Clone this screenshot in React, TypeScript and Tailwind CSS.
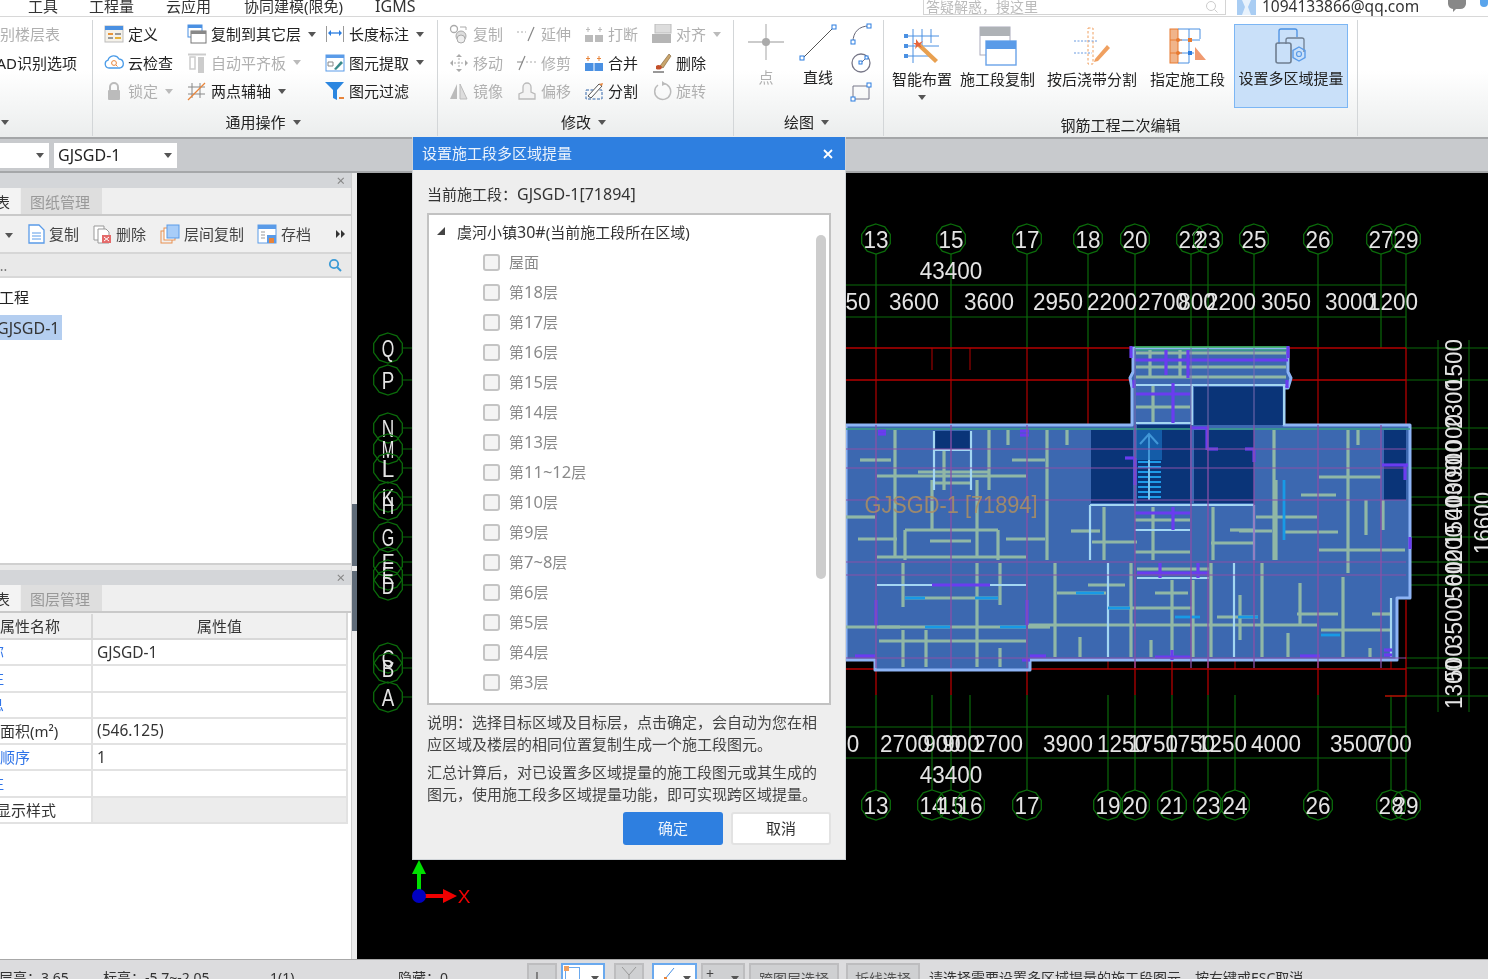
import React from "react";

const Caret = ({ dim = false }: { dim?: boolean }) => (
  <svg width="8" height="5" viewBox="0 0 8 5" className="shrink-0">
    <path d="M0 0h8L4 5z" fill={dim ? "#bbb" : "#555"} />
  </svg>
);

const S = ({ children, w = 20, h = 20 }: { children: React.ReactNode; w?: number; h?: number }) => (
  <svg width={w} height={h} viewBox={`0 0 ${w} ${h}`} fill="none" className="block shrink-0">
    {children}
  </svg>
);

// ribbon icons
const icons = {
  define: <S><rect x="1" y="2" width="18" height="16" fill="#f5f2ea" stroke="#bbb" /><rect x="1" y="2" width="18" height="4" fill="#4a90e2" /><rect x="4" y="9" width="5" height="2" fill="#e8943a" /><rect x="11" y="9" width="6" height="2" fill="#999" /><rect x="4" y="13" width="5" height="2" fill="#999" /><rect x="11" y="13" width="6" height="2" fill="#e8b13a" /></S>,
  copyLayer: <S><rect x="1" y="1" width="14" height="12" fill="#fff" stroke="#4a90e2" /><rect x="1" y="1" width="14" height="3" fill="#4a90e2" /><rect x="4" y="7" width="15" height="12" fill="#fff" stroke="#777" /><rect x="4" y="7" width="15" height="3" fill="#888" /></S>,
  dimension: <S><path d="M1.5 2v16M18.5 2v16" stroke="#999" /><path d="M4 9h12" stroke="#2b7de0" strokeWidth="1.3" /><path d="M3 9l3-3v6zM17 9l-3-3v6z" fill="#2b7de0" /></S>,
  cloud: <S><path d="M5 15a4 4 0 0 1-1-7.8A6 6 0 0 1 15 6a4.6 4.6 0 0 1 1 9z" fill="#fff" stroke="#4a9be8" strokeWidth="1.3" /><circle cx="10" cy="10" r="2.4" stroke="#e8843a" /><path d="M12 12l1.5 1.5" stroke="#e8843a" /></S>,
  align: <S><path d="M1 1.5h18" stroke="#ccc" strokeWidth="2" /><rect x="3" y="4" width="5" height="12" stroke="#ccc" strokeWidth="1.5" /><rect x="11" y="4" width="6" height="16" fill="#ccc" /></S>,
  extract: <S><rect x="1" y="2" width="18" height="16" fill="#fff" stroke="#5a9be8" /><rect x="1" y="2" width="18" height="3" fill="#5a9be8" /><path d="M3 9h5M3 13h5M3 9v4M8 9v4" stroke="#888" /><path d="M9 16l7-8 2 2-7 7z" fill="#3a8a8a" /></S>,
  lock: <S><path d="M6 9V6a4 4 0 0 1 8 0v3" stroke="#bbb" strokeWidth="2" /><rect x="4" y="9" width="12" height="10" rx="1" fill="#bbb" /></S>,
  axis: <S><path d="M5 2v15M13 2v15M1 6h17M1 13h17" stroke="#888" /><path d="M1 19L18 2" stroke="#e8843a" strokeWidth="1.3" /></S>,
  filter: <S><path d="M0 1h19l-7 8v10l-4-2V9z" fill="#2b86e0" /><rect x="14" y="16" width="5" height="2" fill="#e8843a" /></S>,
  copy: <S><circle cx="5" cy="5" r="3.5" stroke="#aaa" strokeWidth="1.3" /><circle cx="12" cy="12" r="5" fill="#ddd" stroke="#aaa" /><circle cx="12" cy="15" r="4" fill="#eee" stroke="#aaa" /><path d="M11 3h6v3" stroke="#aaa" /></S>,
  move: <S><path d="M10 1l3 3H7zM10 19l3-3H7zM1 10l3-3v6zM19 10l-3-3v6z" fill="#aaa" /><path d="M10 5v10M5 10h10" stroke="#aaa" strokeDasharray="2 1.5" /></S>,
  mirror: <S><path d="M8 3v15H1z" fill="#bbb" /><path d="M11 3v15h7z" fill="#ddd" stroke="#bbb" /></S>,
  extend: <S><path d="M0 8h9" stroke="#aaa" strokeDasharray="2 2" /><path d="M11 17l6-14" stroke="#888" strokeWidth="1.2" /></S>,
  trim: <S><path d="M2 17l6-14" stroke="#888" strokeWidth="1.2" /><path d="M0 9h6" stroke="#888" /><path d="M9 9h10" stroke="#aaa" strokeDasharray="2 2" /></S>,
  offset: <S><path d="M2 18v-5l4-2V6a4 4 0 0 1 8 0v5l4 2v5z" fill="#f3f3f3" stroke="#bbb" strokeWidth="1.3" /></S>,
  breakIt: <S><rect x="1" y="11" width="8" height="7" fill="#bbb" /><rect x="11" y="11" width="8" height="7" fill="#bbb" /><path d="M4 3v5M2 5.5h4M16 3v5M14 5.5h4" stroke="#bbb" /></S>,
  merge: <S><rect x="1" y="10" width="8.5" height="8" fill="#4a90e2" /><rect x="10.5" y="10" width="8.5" height="8" fill="#4a90e2" /><path d="M4 3v5M2 5.5h4" stroke="#e8843a" /><path d="M15 3v5M13 5.5h4" stroke="#e8843a" /></S>,
  split: <S><path d="M2 9h16v9H2z" stroke="#36a" strokeDasharray="3 1.5" /><path d="M4 15L15 3l3 2L7 17z" fill="#fff" stroke="#555" /><path d="M15 3l3 2 1-3z" fill="#e8843a" /></S>,
  alignTop: <S><rect x="3" y="0" width="16" height="9" fill="#ddd" stroke="#bbb" /><rect x="0" y="10" width="19" height="9" fill="#b5b5b5" /></S>,
  erase: <S><path d="M8 13L17 1l2 2-8 12z" fill="#c9a56c" stroke="#7a5a30" strokeWidth=".6" /><path d="M4 13c2-2 5-1 6 1 0 3-4 3-6 2z" fill="#c3502a" /><path d="M1 19h11" stroke="#333" /></S>,
  rotate: <S><path d="M6 4a8 8 0 1 0 5-1.5" stroke="#bbb" strokeWidth="1.5" /><path d="M10 0l4 3-4 2z" fill="#bbb" /></S>,
};

type Tool = { icon: keyof typeof icons; label: string; dim?: boolean; caret?: boolean };

const Item = ({ icon, label, dim, caret }: Tool) => (
  <div className="flex items-center h-[28.5px] whitespace-nowrap">
    <span className="w-[19px] mr-[5px] shrink-0">{icons[icon]}</span>
    <span className={dim ? "text-[#b0b0b0]" : "text-[#222]"}>{label}</span>
    {caret && <span className="ml-[7px]"><Caret dim={dim} /></span>}
  </div>
);

const common: Tool[][] = [
  [{ icon: "define", label: "定义" }, { icon: "cloud", label: "云检查" }, { icon: "lock", label: "锁定", dim: true, caret: true }],
  [{ icon: "copyLayer", label: "复制到其它层", caret: true }, { icon: "align", label: "自动平齐板", dim: true, caret: true }, { icon: "axis", label: "两点辅轴", caret: true }],
  [{ icon: "dimension", label: "长度标注", caret: true }, { icon: "extract", label: "图元提取", caret: true }, { icon: "filter", label: "图元过滤" }],
];

const modify: Tool[][] = [
  [{ icon: "copy", label: "复制", dim: true }, { icon: "move", label: "移动", dim: true }, { icon: "mirror", label: "镜像", dim: true }],
  [{ icon: "extend", label: "延伸", dim: true }, { icon: "trim", label: "修剪", dim: true }, { icon: "offset", label: "偏移", dim: true }],
  [{ icon: "breakIt", label: "打断", dim: true }, { icon: "merge", label: "合并" }, { icon: "split", label: "分割" }],
  [{ icon: "alignTop", label: "对齐", dim: true, caret: true }, { icon: "erase", label: "删除" }, { icon: "rotate", label: "旋转", dim: true }],
];

const GroupLabel = ({ label }: { label: string }) => (
  <div className="mt-auto h-[28px] flex items-center justify-center gap-[7px] pr-[4px] text-[#222]">
    <span>{label}</span>
    <Caret />
  </div>
);

const BigButton = ({ w, label, children, caret }: { w: string; label: string; children: React.ReactNode; caret?: boolean }) => (
  <div className={`${w} h-[84px] mt-[4px] flex flex-col items-center whitespace-nowrap`}>
    <div className="h-[44px] flex items-center">{children}</div>
    <div className="mt-[1px] leading-[20px]">{label}</div>
    {caret && <div className="mt-[6px]"><Caret /></div>}
  </div>
);

const Ribbon = () => (
  <div className="h-[122px] flex pt-[3px] pb-[1px] bg-linear-to-b from-white from-45% to-[#ebeded] border-b-2 border-[#a4a6a8] leading-[20px]">
    {/* first group is cut off by the window edge */}
    <div className="w-[93px] shrink-0 flex flex-col border-r border-[#d3d6d8] overflow-hidden">
      <div className="h-[28.5px] flex items-center -ml-[15px] whitespace-nowrap text-[#b0b0b0]">识别楼层表</div>
      <div className="h-[28.5px] flex items-center -ml-[13px] whitespace-nowrap">CAD识别选项</div>
      <div className="mt-auto h-[28px] flex items-center pl-[1px]"><Caret /></div>
    </div>
    <div className="w-[345px] shrink-0 flex flex-col border-r border-[#d3d6d8]">
      <div className="grid grid-cols-[83px_138px_1fr] pl-[11px]">
        {common.map((col, i) => <div key={i}>{col.map((t) => <Item key={t.label} {...t} />)}</div>)}
      </div>
      <GroupLabel label="通用操作" />
    </div>
    <div className="w-[296px] shrink-0 flex flex-col border-r border-[#d3d6d8]">
      <div className="grid grid-cols-[68px_67px_68px_1fr] pl-[11px]">
        {modify.map((col, i) => <div key={i}>{col.map((t) => <Item key={t.label} {...t} />)}</div>)}
      </div>
      <GroupLabel label="修改" />
    </div>
    <div className="w-[150px] shrink-0 flex flex-col border-r border-[#d3d6d8]">
      <div className="flex">
        <div className="w-[64px] flex flex-col items-center pt-[3px]">
          <S w={38} h={38}><path d="M19 1v36M1 19h36" stroke="#bbb" strokeWidth="1.3" /><circle cx="19" cy="19" r="4" fill="#aaa" /></S>
          <div className="mt-[6px] text-[#b0b0b0]">点</div>
        </div>
        <div className="w-[40px] flex flex-col items-center pt-[3px]">
          <S w={38} h={38}><path d="M3 36L35 4" stroke="#555" /><rect x="1" y="33" width="4" height="4" fill="#fff" stroke="#2b7de0" /><rect x="33" y="2" width="4" height="4" fill="#fff" stroke="#2b7de0" /></S>
          <div className="mt-[6px]">直线</div>
        </div>
        <div className="flex-1 flex flex-col items-center">
          <div className="h-[28.5px] flex items-center"><S w={22} h={22}><path d="M3 19C3 9 9 3 19 3" stroke="#667" /><rect x="1" y="17" width="4" height="4" fill="#fff" stroke="#2b7de0" /><rect x="17" y="1" width="4" height="4" fill="#fff" stroke="#2b7de0" /></S></div>
          <div className="h-[28.5px] flex items-center"><S w={22} h={22}><circle cx="11" cy="11" r="9" stroke="#778" strokeWidth="1.3" /><path d="M11 11l5-5" stroke="#778" /><rect x="9" y="9" width="3" height="3" fill="#fff" stroke="#2b7de0" /><rect x="15" y="4" width="3" height="3" fill="#fff" stroke="#2b7de0" /></S></div>
          <div className="h-[28.5px] flex items-center"><S w={22} h={22}><path d="M3 6h16v13H3z" stroke="#778" /><rect x="1" y="17" width="4" height="4" fill="#fff" stroke="#2b7de0" /><rect x="17" y="3" width="4" height="4" fill="#fff" stroke="#2b7de0" /></S></div>
        </div>
      </div>
      <GroupLabel label="绘图" />
    </div>
    <div className="w-[474px] shrink-0 flex flex-col border-r border-[#d3d6d8]">
      <div className="flex">
        <BigButton w="w-[76px]" label="智能布置" caret>
          <S w={38} h={38}>
            <path d="M2 9h34M2 19h34M2 29h24M10 2v34M19 2v20M28 2v14" stroke="#4a90e2" />
            <path d="M1 7h4v4H1zM1 17h4v4H1zM1 27h4v4H1z" fill="#4a90e2" />
            <path d="M17 16l18 17-3 3-18-17z" fill="#e8a050" />
            <path d="M13 12l3 4 4-2-3 4 2 3-4-2-3 3 1-4-3-2h3z" fill="#e8643a" />
          </S>
        </BigButton>
        <BigButton w="w-[75px]" label="施工段复制">
          <S w={38} h={40}>
            <rect x="1" y="1" width="30" height="28" fill="#fff" stroke="#aab" />
            <rect x="1" y="1" width="30" height="9" fill="#aeb2b6" />
            <rect x="7" y="15" width="30" height="24" fill="#fff" stroke="#6aa3e8" strokeWidth="1.4" />
            <rect x="7" y="15" width="30" height="8" fill="#5a9be8" />
          </S>
        </BigButton>
        <BigButton w="w-[114px]" label="按后浇带分割">
          <S w={38} h={38}>
            <path d="M15 1h5v36h-5z" stroke="#f0a060" strokeDasharray="2.5 2" />
            <path d="M1 14h24M1 26h18" stroke="#6a9be0" strokeDasharray="2 1.5" />
            <path d="M22 32l12-14 3 3-12 13-4 1z" fill="#f0a060" />
          </S>
        </BigButton>
        <BigButton w="w-[77px]" label="指定施工段">
          <S w={38} h={38}>
            <rect x="1" y="2" width="8" height="34" fill="#f0b48a" stroke="#e87a30" />
            <path d="M9 2h22v10M9 13h22M9 26h16M20 2v34H9" stroke="#4a90e2" />
            <path d="M1 13h12M1 26h12" stroke="#e87a30" />
            <circle cx="9" cy="13" r="2" fill="#e87a30" /><circle cx="9" cy="26" r="2" fill="#e87a30" />
            <rect x="19" y="11" width="4" height="4" fill="#e87a30" /><rect x="19" y="24" width="4" height="4" fill="#2b7de0" />
            <path d="M26 20l11 13H26z" fill="#f09a70" />
          </S>
        </BigButton>
        <div className="ml-[8px] mt-[4px] w-[114px] h-[84px] border border-[#7cb6f4] bg-[#c9e0f9] flex flex-col items-center whitespace-nowrap">
          <div className="h-[43px] flex items-center">
            <S w={32} h={38}>
              <path d="M4 16V3a2 2 0 0 1 2-2h14a2 2 0 0 1 2 2v6" stroke="#4a90e2" strokeWidth="1.3" />
              <path d="M11 16v-4a2 2 0 0 1 2-2h14a2 2 0 0 1 2 2v12" stroke="#6f7e90" strokeWidth="1.3" />
              <rect x="1" y="15" width="15" height="20" rx="2" stroke="#6f7e90" strokeWidth="1.6" />
              <path d="M24 19l6 3.5v7L24 33l-6-3.500v-7z" stroke="#5a9be8" strokeWidth="1.4" />
              <circle cx="24" cy="26" r="2.500" stroke="#5a9be8" strokeWidth="1.2" />
            </S>
          </div>
          <div className="leading-[20px]">设置多区域提量</div>
        </div>
      </div>
      <div className="mt-auto h-[22px] flex items-center justify-center">钢筋工程二次编辑</div>
    </div>
  </div>
);

const MenuBar = () => (
  <div className="h-[17px] bg-white border-b border-[#d8d8d8] flex text-[15px] text-[#333] overflow-hidden leading-[12px] relative">
    <div className="flex whitespace-nowrap">
      <span className="ml-[28px]">工具</span>
      <span className="ml-[31px]">工程量</span>
      <span className="ml-[32px]">云应用</span>
      <span className="ml-[33px]">协同建模(限免)</span>
      <span className="ml-[32px] text-[16px]">IGMS</span>
    </div>
    <div className="ml-auto flex items-start h-[16px]">
      <div className="w-[303px] h-[15px] border border-t-0 border-[#d4d4d4] flex items-center px-[2px] text-[14px] text-[#bbb] whitespace-nowrap justify-between">
        <span>答疑解惑，搜这里</span>
        <svg width="14" height="14" viewBox="0 0 14 14" fill="none" className="mr-[4px]"><circle cx="6" cy="6" r="4.5" stroke="#ccc" /><path d="M9.500 9.500l3 3" stroke="#ccc" /></svg>
      </div>
      <svg width="19" height="15" viewBox="0 0 19 15" className="ml-[11px]"><path d="M0 0h19v15H0z" fill="#a9cdf3" /><path d="M5 0h9l-3 7 3 8H5l3-8z" fill="#e8f2fc" /></svg>
      <span className="ml-[6px] w-[186px] text-[15.500px] leading-[12px] text-[#333] whitespace-nowrap">1094133866@qq.com</span>
      <svg width="18" height="12" viewBox="0 0 18 12" className="mr-[14px]"><path d="M0 0h18v4a6 6 0 0 1-6 5H8l-3 3V9a6 6 0 0 1-5-5z" fill="#888" /></svg>
      <div className="w-[8px] h-[7px] bg-[#5aa5ec] rounded-b-full" />
    </div>
  </div>
);

const SubBar = () => (
  <div className="h-[34px] bg-[#c8cacd] border-b-2 border-[#a5a7a9] flex items-center gap-[5px] text-[16px] text-[#222]">
    <div className="w-[49px] h-[25px] bg-white flex items-center justify-end pr-[5px]"><Caret /></div>
    <div className="w-[123px] h-[25px] bg-white flex items-center justify-between pl-[4px] pr-[5px]">
      <span>GJSGD-1</span><Caret />
    </div>
  </div>
);

const PanelHead = () => (
  <div className="h-[15px] bg-[#d4d6d9] flex items-center justify-end pr-[6px] text-[#888] text-[15px] leading-none">×</div>
);

const Tabs = ({ label }: { label: string }) => (
  <div className="h-[28px] bg-[#efefef] flex border-b-2 border-[#c9c9c9] items-stretch">
    <div className="w-[20px] shrink-0 bg-[#f3f3f3] overflow-hidden flex items-center justify-end pr-[10px] pt-[2px] text-[#333]">
      <span className="whitespace-nowrap">表</span>
    </div>
    <div className="w-[81px] bg-[#dedede] flex items-center pl-[9px] pt-[2px] text-[#999] ml-[1px]">{label}</div>
  </div>
);

const paneTools = [
  { cls: "ml-[27px] gap-[2px]", label: "复制", icon: <S><path d="M2 1h10l5 5v13H2z" fill="#fff" stroke="#5a9be8" strokeWidth="1.3" /><path d="M5 9h9M5 12h9M5 15h9" stroke="#5a9be8" /></S> },
  { cls: "ml-[14px] gap-[3px]", label: "删除", icon: <S><path d="M1 2h10v14H1z" fill="#fff" stroke="#999" /><path d="M5 5h8l3 3v11H5z" fill="#fff" stroke="#999" /><rect x="9" y="11" width="9" height="8" fill="#e46a6a" /><path d="M11 13l5 4M16 13l-5 4" stroke="#fff" /></S> },
  { cls: "ml-[14px] gap-[4px]", label: "层间复制", icon: <S><rect x="1" y="7" width="11" height="12" stroke="#e89050" /><rect x="4" y="4" width="11" height="12" fill="#fff" stroke="#e89050" /><rect x="7" y="1" width="12" height="13" fill="#a8cdf8" stroke="#5a9be8" /></S> },
  { cls: "ml-[13px] gap-[4px]", label: "存档", icon: <S><rect x="1" y="1" width="18" height="18" fill="#fff" stroke="#5a9be8" /><rect x="1" y="1" width="18" height="4" fill="#5a9be8" /><path d="M4 8h4M4 11h4M4 14h4" stroke="#999" /><rect x="10" y="11" width="9" height="8" fill="#5a9be8" /><rect x="12" y="14" width="5" height="5" fill="#e8843a" /></S> },
];

const LeftTop = () => (
  <div className="h-[392px] flex flex-col shrink-0 border-b-2 border-[#d0d0d0]">
    <PanelHead />
    <Tabs label="图纸管理" />
    <div className="h-[38px] bg-[#f0f0f0] border-b-2 border-[#d6d6d6] flex items-center text-[#444] relative">
      <span className="absolute left-[5px] top-[17px]"><Caret /></span>
      {paneTools.map((t) => (
        <div key={t.label} className={`${t.cls} flex items-center whitespace-nowrap`}>{t.icon}<span>{t.label}</span></div>
      ))}
      <svg width="10" height="8" viewBox="0 0 10 8" className="ml-auto mr-[5px]"><path d="M0 0l4 4-4 4zM5 0l4 4-4 4z" fill="#333" /></svg>
    </div>
    <div className="h-[24px] border-b-2 border-[#d8d8d8] flex items-center justify-between pr-[9px] text-[#777] text-[14px]">
      <span className="-ml-[4px]">...</span>
      <svg width="14" height="14" viewBox="0 0 14 14" fill="none"><circle cx="6" cy="6" r="4.200" stroke="#3b9bd6" strokeWidth="1.800" /><path d="M9 9l4 4" stroke="#3b9bd6" strokeWidth="2" /></svg>
    </div>
    <div className="flex-1 bg-white overflow-hidden">
      <div className="h-[37px] flex items-center -ml-[1px] pt-[2px] text-[#222]">工程</div>
      <div className="w-[62px] h-[25px] bg-[#b4cef0] overflow-hidden flex items-center text-[#333] text-[16px]">
        <span className="-ml-[3px] whitespace-nowrap">GJSGD-1</span>
      </div>
    </div>
  </div>
);

const propRows = [
  { name: "称", value: "GJSGD-1", blue: true, cut: true },
  { name: "注", value: "", blue: true, cut: true },
  { name: "息", value: "", blue: true, cut: true },
  { name: "面积(m²)", value: "(546.125)", blue: false, cut: false },
  { name: "顺序", value: "1", blue: true, cut: false },
  { name: "注", value: "", blue: true, cut: true },
];

const LeftBottom = () => (
  <div className="flex-1 bg-white flex flex-col mt-[5px]">
    <PanelHead />
    <Tabs label="图层管理" />
    <div className="w-[348px]">
      <div className="h-[27px] grid grid-cols-[93px_1fr] bg-[#f0f0f0] border-b-2 border-r-2 border-[#d8d8d8] text-[#333] pt-[1px]">
        <div className="border-r-2 border-[#d8d8d8] flex items-center whitespace-nowrap">属性名称</div>
        <div className="flex items-center justify-center">属性值</div>
      </div>
      {propRows.map((r, i) => (
        <div key={i} className="h-[26.300px] grid grid-cols-[93px_1fr] border-b-2 border-r-2 border-[#e2e2e2] text-[#333]">
          <div className="border-r-2 border-[#e2e2e2] flex items-center overflow-hidden whitespace-nowrap">
            <span className={`${r.cut ? "-ml-[11px]" : ""} ${r.blue ? "text-[#2f74e8]" : "text-[#333]"}`}>{r.name}</span>
          </div>
          <div className="flex items-center pl-[4px] text-[15.500px]">{r.value}</div>
        </div>
      ))}
      <div className="h-[26.300px] grid grid-cols-[93px_1fr] border-b-2 border-r-2 border-[#e2e2e2] text-[#333]">
        <div className="border-r-2 border-[#e2e2e2] flex items-center overflow-hidden whitespace-nowrap"><span className="-ml-[4px]">显示样式</span></div>
        <div className="bg-[#ececec]" />
      </div>
    </div>
  </div>
);

// ---- cad drawing ----
const topAxes: [string, number][] = [["13", 876], ["15", 951], ["17", 1027], ["18", 1088], ["20", 1135], ["22", 1191], ["23", 1208], ["25", 1254], ["26", 1318], ["27", 1381], ["29", 1406]];
const botAxes: [string, number][] = [["13", 876], ["14", 932], ["15", 951], ["16", 970], ["17", 1027], ["19", 1108], ["20", 1135], ["21", 1172], ["23", 1208], ["24", 1235], ["26", 1318], ["28", 1391], ["29", 1406]];
const leftAxes: [string, number][] = [["Q", 348], ["P", 380], ["N", 428], ["M", 449], ["L", 468], ["K", 497], ["H", 505], ["G", 537], ["F", 562], ["E", 575], ["D", 585], ["C", 658], ["B", 668], ["A", 697]];
const topDims: [string, number][] = [["50", 858], ["3600", 914], ["3600", 989], ["2950", 1058], ["2200", 1112], ["2700", 1163], ["800", 1197], ["2200", 1231], ["3050", 1286], ["3000", 1350], ["1200", 1393]];
const botDims: [string, number][] = [["0", 853], ["2700", 905], ["900", 942], ["900", 961], ["2700", 998], ["3900", 1068], ["1250", 1122], ["1750", 1153], ["1750", 1190], ["1250", 1222], ["4000", 1276], ["3500", 1355], ["700", 1393]];
const sideDims: [string, number][] = [["1500", 364], ["2300", 404], ["1000", 439], ["900", 459], ["1300", 483], ["400", 501], ["1500", 521], ["1200", 550], ["600", 568], ["500", 580], ["3500", 622], ["500", 663], ["1300", 684]];

// beams: x1,y1,x2,y2
const beams: number[][] = [
  [846, 517, 875, 517], [877, 557, 1026, 557], [858, 539, 897, 539], [930, 541, 971, 541], [1006, 539, 1045, 539], [905, 530, 998, 530],
  [895, 430, 895, 557], [977, 480, 977, 557], [1047, 430, 1047, 560], [932, 480, 932, 530], [905, 530, 905, 560], [998, 530, 998, 560],
  [989, 430, 989, 490], [1008, 430, 1008, 445], [1067, 430, 1067, 445], [860, 460, 891, 460], [1012, 460, 1045, 460], [877, 476, 1026, 476], [918, 472, 989, 472], [944, 450, 944, 490], [934, 483, 971, 483],
  [903, 563, 903, 607], [1000, 563, 1000, 605], [905, 598, 998, 598], [846, 627, 900, 627], [1028, 627, 1050, 627], [879, 627, 1026, 627], [879, 641, 1026, 641],
  [903, 630, 903, 667], [926, 630, 926, 667], [977, 563, 977, 667], [1000, 648, 1000, 667], [1028, 625, 1317, 625], [1055, 563, 1055, 657], [1080, 637, 1080, 657], [1057, 593, 1106, 593], [1088, 585, 1125, 585],
  [1131, 563, 1131, 657], [1108, 608, 1194, 608], [1151, 640, 1151, 657], [1172, 580, 1172, 657], [1193, 580, 1193, 657], [1211, 563, 1211, 657], [1262, 563, 1262, 657], [1288, 633, 1288, 657], [1297, 614, 1338, 614], [1217, 617, 1258, 617], [1155, 593, 1188, 593],
  [1343, 577, 1343, 657], [1372, 614, 1391, 614], [1321, 630, 1391, 630], [1370, 648, 1370, 657], [1276, 480, 1276, 560], [1256, 517, 1317, 517], [1239, 531, 1272, 531], [1301, 495, 1336, 495], [1348, 430, 1348, 573], [1319, 550, 1405, 550], [1284, 532, 1338, 532], [1383, 500, 1383, 530], [1366, 500, 1366, 535], [1274, 430, 1274, 560], [1319, 477, 1381, 477], [1358, 430, 1358, 445],
  [1071, 531, 1100, 531], [1092, 542, 1137, 542], [1104, 507, 1104, 560], [1135, 520, 1190, 520], [1135, 552, 1190, 552], [1153, 507, 1153, 560], [1213, 507, 1213, 560], [1211, 543, 1254, 543], [1230, 530, 1254, 530], [1137, 569, 1209, 569],
  [1150, 350, 1150, 378], [1180, 350, 1180, 378], [1136, 367, 1286, 367], [1136, 377, 1286, 377], [1153, 385, 1153, 423], [1136, 407, 1190, 407], [1136, 353, 1286, 353],
  [1240, 595, 1240, 640], [1300, 583, 1300, 625],
];
const cyans: number[][] = [
  [934, 431, 934, 490], [971, 431, 971, 490], [934, 450, 971, 450], [877, 585, 1026, 585], [1108, 563, 1108, 657], [1234, 563, 1234, 657], [1090, 505, 1254, 505], [1090, 505, 1090, 560], [1254, 505, 1254, 560], [1135, 530, 1190, 530], [1137, 578, 1209, 578], [1136, 423, 1192, 423], [1192, 385, 1192, 425], [1284, 385, 1284, 425], [1136, 385, 1286, 385], [1391, 598, 1391, 657],
];
const blues: number[][] = [[905, 598, 925, 598], [975, 598, 998, 598], [925, 627, 950, 627], [1000, 627, 1026, 627], [1076, 593, 1104, 593], [1108, 608, 1130, 608], [1175, 617, 1200, 617], [1238, 617, 1258, 617], [1321, 635, 1340, 635], [1284, 480, 1284, 540]];
const violets: number[][] = [
  [1135, 360, 1288, 360], [1166, 350, 1166, 375], [1188, 350, 1188, 378], [1136, 394, 1190, 394], [1173, 383, 1173, 423], [1131, 346, 1131, 358], [1288, 346, 1288, 358], [1134, 380, 1134, 388], [1287, 380, 1287, 388],
  [878, 431, 886, 431], [878, 434, 886, 434], [1020, 431, 1029, 431], [1020, 435, 1029, 435], [1190, 428, 1209, 428], [1207, 428, 1207, 450], [1207, 449, 1218, 449], [1245, 449, 1254, 449], [1254, 449, 1254, 462], [1125, 458, 1135, 458], [1135, 458, 1135, 485],
  [1382, 465, 1408, 465], [1405, 465, 1405, 480], [1135, 513, 1190, 513], [1173, 507, 1173, 530], [1137, 573, 1209, 573], [1160, 563, 1160, 578], [1198, 563, 1198, 578], [1410, 537, 1410, 549],
  [876, 600, 876, 625], [1027, 600, 1027, 625], [932, 585, 990, 585], [855, 656, 875, 656], [1030, 656, 1046, 656], [1155, 657, 1190, 657], [1172, 650, 1172, 660], [1300, 656, 1320, 656], [1384, 650, 1392, 650], [1384, 655, 1392, 655], [1022, 660, 1030, 660],
];

const poly = (cx: number, cy: number, r: number) =>
  Array.from({ length: 10 }, (_, i) => {
    const a = (Math.PI * 2 * i) / 10 - Math.PI / 2;
    return `${(cx + r * Math.cos(a)).toFixed(1)},${(cy + r * Math.sin(a)).toFixed(1)}`;
  }).join(" ");

const Lines = ({ list, color, width }: { list: number[][]; color: string; width: number }) => (
  <g stroke={color} strokeWidth={width}>
    {list.map((l, i) => <line key={i} x1={l[0]} y1={l[1]} x2={l[2]} y2={l[3]} />)}
  </g>
);

const Num = ({ t, x, y, rot, unit = 12.5 }: { t: string; x: number; y: number; rot?: boolean; unit?: number }) => (
  <text x={x} y={y} fill="#e4e4e4" fontSize="24" textAnchor="middle" dominantBaseline="central" textLength={t.length * unit} lengthAdjust="spacingAndGlyphs" transform={rot ? `rotate(-90 ${x} ${y})` : undefined}>
    {t}
  </text>
);

const Bubble = ({ t, x, y }: { t: string; x: number; y: number }) => (
  <g>
    <polygon points={poly(x, y, 15)} fill="none" stroke="#0b6b0b" strokeWidth="1.300" />
    <Num t={t} x={x} y={y} />
  </g>
);

const Canvas = () => (
  <svg viewBox="357 173 1131 786" width="1131" height="786" className="block [font-family:'Liberation_Sans',sans-serif]">
    <rect x="357" y="173" width="1131" height="786" fill="#000" />
    {/* axis lines */}
    {topAxes.map(([, x]) => <line key={x} x1={x} y1="254" x2={x} y2="348" stroke="#0a6a0a" strokeWidth="1.200" />)}
    {botAxes.map(([, x]) => <line key={x} x1={x} y1="695" x2={x} y2="790" stroke="#0a6a0a" strokeWidth="1.200" />)}
    {leftAxes.map(([n, y]) => <line key={n} x1="403" y1={y} x2="412" y2={y} stroke="#0a6a0a" />)}
    <path d="M846 285H1406M846 317H1406M846 727H1406M846 758H1406" stroke="#0a6a0a" strokeWidth="1.200" />
    <path d="M1406 348H1488M1406 380H1488M1406 428H1488M1406 449H1488M1406 468H1488M1406 497H1488M1406 505H1488M1406 537H1488M1406 562H1488M1406 575H1488M1406 585H1488M1406 658H1488M1406 668H1488M1385 696H1488" stroke="#0a6a0a" />
    <path d="M1438 340V712M1469 340V712" stroke="#0a6a0a" />
    {/* red grid */}
    <path d="M846 348H1406M846 380H1406M846 669H1406M1406 348V425M1406 600V696H1385" stroke="#b40000" strokeWidth="1.300" fill="none" />
    {topAxes.slice(0, 9).map(([, x]) => <line key={x} x1={x} y1="348" x2={x} y2="425" stroke="#b40000" strokeWidth="1.200" />)}
    {[876, 951, 1027, 1135, 1172, 1208, 1318].map((x) => <line key={x} x1={x} y1="660" x2={x} y2="695" stroke="#b40000" strokeWidth="1.300" />)}
    {[1108, 1235, 1391].map((x) => <line key={x} x1={x} y1="660" x2={x} y2="669" stroke="#b40000" />)}
    <path d="M932 348V370M970 348V370" stroke="#b40000" />
    {/* slab */}
    <path d="M846 425H1132V388L1130 378 1133 372V348H1288V372L1291 378 1288 388 1284 388V425H1410V598H1397V660H1030V670H875V660H846Z" fill="#3c68b0" stroke="#8db4f5" strokeWidth="3" strokeLinejoin="round" />
    <g fill="#0a3478">
      <rect x="1194" y="387" width="90" height="38" />
      <rect x="934" y="431" width="37" height="18" />
      <rect x="1091" y="430" width="42" height="73" />
      <rect x="1137" y="425" width="53" height="78" />
      <rect x="1194" y="430" width="60" height="73" />
      <rect x="1384" y="430" width="22" height="70" />
    </g>
    {/* stair */}
    <g stroke="#1e9ae8" strokeWidth="2">
      {[462, 467, 472, 477, 482, 487, 492, 497].map((y) => <line key={y} x1="1138" y1={y} x2="1161" y2={y} />)}
      <path d="M1149 500V434M1140 444L1149 434 1158 444" fill="none" stroke="#7ac4ee" />
    </g>
    <rect x="1137" y="430" width="25" height="30" fill="#1a78c8" opacity=".6" />
    <path d="M846 429H1410M1135 350H1288" stroke="#3aa088" strokeWidth="1.500" />
    <path d="M1135 347H1288" stroke="#35b050" strokeWidth="1.500" />
    <Lines list={beams} color="#90b7a6" width={3.200} />
    <Lines list={cyans} color="#a3d6f2" width={2.200} />
    <Lines list={blues} color="#189ae6" width={2.800} />
    <Lines list={violets} color="#6a3cf0" width={3.200} />
    {/* purple axis lines over slab */}
    <path d="M846 449H1406M846 468H1406M846 500H1406M846 562H1406M846 575H1406M846 658H1406" stroke="#8a50a8" strokeWidth="1.200" />
    {[876, 951, 1027, 1135, 1191, 1208, 1254, 1318, 1381].map((x) => <line key={x} x1={x} y1="425" x2={x} y2="668" stroke="#8a50a8" strokeWidth="1.300" />)}
    <path d="M1135 348V425M1191 348V425M1208 348V425M1254 348V425" stroke="#7a6ab0" strokeWidth="1" />
    <text x="951" y="505" fill="#ae8f62" opacity=".85" fontSize="23" textAnchor="middle" dominantBaseline="central" textLength="173" lengthAdjust="spacingAndGlyphs">GJSGD-1 [71894]</text>
    {/* labels */}
    {topAxes.map(([t, x]) => <Bubble key={t} t={t} x={x} y={239} />)}
    {botAxes.map(([t, x]) => <Bubble key={t} t={t} x={x} y={805} />)}
    {leftAxes.map(([t, y]) => <Bubble key={t} t={t} x={388} y={y} />)}
    {topDims.map(([t, x], i) => <Num key={i} t={t} x={x} y={301} />)}
    {botDims.map(([t, x], i) => <Num key={i} t={t} x={x} y={743} />)}
    <Num t="43400" x={951} y={270} />
    <Num t="43400" x={951} y={774} />
    {sideDims.map(([t, y], i) => <Num key={i} t={t} x={1453} y={y} rot />)}
    <Num t="16600" x={1482} y={523} rot />
    {/* origin */}
    <path d="M419 896V872" stroke="#00e000" strokeWidth="4" />
    <path d="M419 860l7 14h-14z" fill="#00e000" />
    <path d="M419 896H444" stroke="#f00000" strokeWidth="4" />
    <path d="M457 896l-14-7v14z" fill="#f00000" />
    <circle cx="419" cy="896" r="7" fill="#0000c0" />
    <text x="464" y="896" fill="#f00000" fontSize="19" textAnchor="middle" dominantBaseline="central">X</text>
  </svg>
);

const floors = ["屋面", "第18层", "第17层", "第16层", "第15层", "第14层", "第13层", "第11~12层", "第10层", "第9层", "第7~8层", "第6层", "第5层", "第4层", "第3层"];

const Modal = () => (
  <div className="absolute left-[412px] top-[137px] w-[434px] h-[723px] bg-[#eeeeee] border-x border-b border-[#d0d4d8] flex flex-col">
    <div className="h-[33px] bg-[#2e7fe0] flex items-center justify-between pl-[9px] pr-[10px] text-white/90 shrink-0">
      <span>设置施工段多区域提量</span>
      <svg width="12" height="12" viewBox="0 0 12 12" className="mr-[1px]"><path d="M2 2l8 8M10 2l-8 8" stroke="#fff" strokeWidth="1.800" /></svg>
    </div>
    <div className="h-[43px] shrink-0 pl-[14px] pt-[14px] leading-[20px] text-[#333] whitespace-nowrap">当前施工段：<span className="text-[16px]">GJSGD-1[71894]</span></div>
    <div className="mx-[14px] h-[492px] shrink-0 bg-white border-2 border-[#c2c2c2] relative overflow-hidden">
      <div className="h-[34px] -mb-[2px] flex items-center pl-[28px] text-[#333] relative whitespace-nowrap">
        <svg width="8" height="8" viewBox="0 0 8 8" className="absolute left-[8px] top-[12px]"><path d="M8 0v8H0z" fill="#444" /></svg>
        虞河小镇<span className="text-[16px]">30#</span>(当前施工段所在区域)
      </div>
      {floors.map((f) => (
        <div key={f} className="h-[30px] flex items-center pl-[54px] text-[#8a8a8a]">
          <span className="w-[17px] h-[17px] rounded-[3px] border-2 border-[#c4c4c4] bg-[#f4f4f4] mr-[8px] shrink-0" />
          <span className="pl-[1px]">
            {f.split(/(\d+~?\d*)/).map((part, i) => (
              <span key={i} className={i % 2 === 1 ? "text-[16.500px]" : ""}>{part}</span>
            ))}
          </span>
        </div>
      ))}
      <div className="absolute left-[387px] top-[20px] w-[10px] h-[344px] rounded-full bg-[#cdcdcd]" />
    </div>
    <div className="pl-[14px] pt-[6px] text-[#444] leading-[22px] whitespace-nowrap">
      <div>说明：选择目标区域及目标层，点击确定，会自动为您在相</div>
      <div>应区域及楼层的相同位置复制生成一个施工段图元。</div>
      <div className="mt-[6px]">汇总计算后，对已设置多区域提量的施工段图元或其生成的</div>
      <div>图元，使用施工段多区域提量功能，即可实现跨区域提量。</div>
    </div>
    <div className="flex justify-end gap-[8px] pr-[14px] mt-[7px]">
      <div className="w-[100px] h-[33px] bg-[#2e7fe0] rounded-[3px] flex items-center justify-center text-white/90">确定</div>
      <div className="w-[100px] h-[33px] bg-white border-2 border-[#e2e2e2] rounded-[3px] flex items-center justify-center text-[#333]">取消</div>
    </div>
  </div>
);

const StatusBar = () => (
  <div className="h-[21px] bg-[#dcdcde] border-t border-[#a8a8a8] overflow-hidden flex items-start text-[14px] text-[#333] whitespace-nowrap relative">
    <span className="mt-[7px] -ml-[1px] w-[104px]">层高：3.65</span>
    <span className="mt-[7px] w-[167px]">标高：-5.7~-2.05</span>
    <span className="mt-[7px] w-[128px]">1(1)</span>
    <span className="mt-[7px] w-[129px]">隐藏：0</span>
    <div className="mt-[3px] flex gap-[4px] items-start">
      <div className="w-[30px] h-[24px] bg-[#cfd0d2] border-2 border-[#bdbdbf] pl-[6px] leading-[24px] text-[#555]">L</div>
      <div className="w-[44px] h-[24px] bg-white border-2 border-[#6aa9ee] flex items-start justify-between pr-[4px]">
        <span className="w-[15px] h-[15px] mt-[2px] ml-[2px] border border-[#6aa9ee] relative"><span className="absolute -left-[2px] -top-[2px] w-[5px] h-[5px] bg-[#f0a060]" /></span>
        <span className="mt-[11px]"><Caret /></span>
      </div>
      <div className="ml-[5px] w-[30px] h-[24px] bg-[#cfd0d2] border-2 border-[#bdbdbf] flex justify-center"><svg width="18" height="18" viewBox="0 0 18 18"><path d="M2 2l7 8 7-8M9 10v6" stroke="#999" fill="none" /></svg></div>
      <div className="ml-[4px] w-[45px] h-[24px] bg-white border-2 border-[#6aa9ee] flex items-start justify-between pr-[4px] pl-[10px]">
        <svg width="12" height="16" viewBox="0 0 12 16"><path d="M1 14L10 3" stroke="#4a90e2" /><rect x="0" y="12" width="3" height="3" fill="#e8843a" /></svg>
        <span className="mt-[11px]"><Caret /></span>
      </div>
      <div className="w-[44px] h-[24px] bg-[#cfd0d2] border-2 border-[#bdbdbf] flex items-start justify-between pl-[3px] pr-[4px] text-[#444]">
        <span className="leading-[18px]">+</span>
        <span className="mt-[11px]"><Caret /></span>
      </div>
      <div className="w-[90px] h-[24px] bg-[#cfd0d2] border-2 border-[#bdbdbf] flex justify-center pt-[3px] text-[#555]">跨图层选择</div>
      <div className="ml-[3px] w-[74px] h-[24px] bg-[#cfd0d2] border-2 border-[#bdbdbf] flex justify-center pt-[3px] text-[#555]">折线选择</div>
    </div>
    <span className="mt-[7px] ml-[9px]">请选择需要设置多区域提量的施工段图元，按右键或ESC取消</span>
  </div>
);

export default function App() {
  return (
    <div className="relative w-[1488px] h-[979px] overflow-hidden bg-white text-[15px] text-[#222] [font-family:'Noto_Sans','Noto_Sans_CJK_SC',sans-serif] blur-[0.4px]">
      <MenuBar />
      <Ribbon />
      <SubBar />
      <div className="h-[786px] flex">
        <div className="w-[352px] shrink-0 flex flex-col bg-[#e9e9e9] border-r border-[#cfcfcf]">
          <LeftTop />
          <LeftBottom />
        </div>
        <div className="w-[5px] shrink-0 bg-[#ececec] flex flex-col">
          <div className="mt-[331px] h-[62px] bg-[#5f6b78]" />
          <div className="mt-[5px] h-[60px] bg-[#5f6b78]" />
        </div>
        <Canvas />
      </div>
      <StatusBar />
      <Modal />
    </div>
  );
}
